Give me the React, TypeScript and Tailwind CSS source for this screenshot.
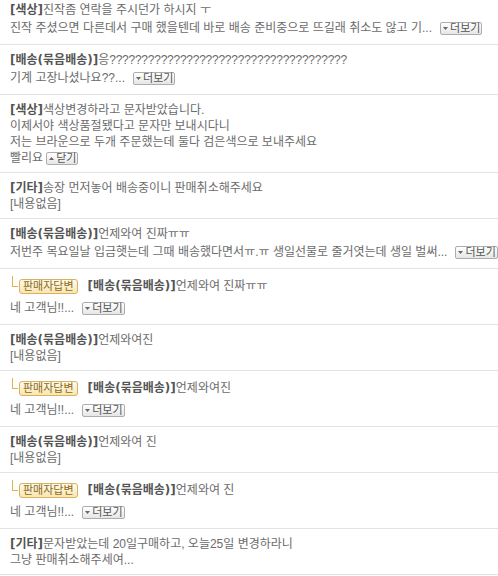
import React from 'react';

const bodyFont = "font-['Liberation_Sans','Noto_Sans_CJK_KR',sans-serif]";
const titleFont = "font-['DejaVu_Sans','Noto_Sans_CJK_KR',sans-serif]";

const ToggleButton: React.FC<{ label: string; up?: boolean }> = ({ label, up }) => (
  <span className="ml-2 inline-flex h-[13px] shrink-0 items-center gap-[1px] rounded-[2px] border border-[#adadad] bg-gradient-to-b from-white to-[#e6e6e6] pl-[2px] pr-[1px] text-[11px] leading-[11px] text-[#555]">
    <svg width="5" height="3" viewBox="0 0 5 3" className="mr-[1px]">
      <path d={up ? 'M0 3h5L2.5 0z' : 'M0 0h5L2.5 3z'} fill="#666" />
    </svg>
    {label}
  </span>
);

const Title: React.FC<{ children: React.ReactNode }> = ({ children }) => (
  <b className={`${titleFont} font-bold text-[#555]`}>{children}</b>
);

const ReplyBadge: React.FC = () => (
  <>
    <span className="ml-[2px] mr-[1px] h-[11px] w-[6px] shrink-0 self-start border-b border-l border-[#e0b44c]" />
    <span className="shrink-0 rounded-[3px] border border-[#d8b25c] bg-gradient-to-b from-[#fffaea] to-[#f9e6b0] px-[3px] text-[11px] leading-[13px] text-[#8a6a1c]">
      판매자답변
    </span>
  </>
);

const Row: React.FC<{ children: React.ReactNode; first?: boolean }> = ({ children, first }) => (
  <div className={`border-b border-[#e3e3e3] px-[10px] pb-[6px] ${first ? 'pt-[2px]' : 'pt-[7px]'}`}>{children}</div>
);

const Line: React.FC<{ children: React.ReactNode }> = ({ children }) => (
  <div className="flex h-4 items-center whitespace-nowrap">{children}</div>
);

const PreviewLine: React.FC<{ children: React.ReactNode }> = ({ children }) => (
  <div className="flex h-5 items-center whitespace-nowrap">
    {children}
    <ToggleButton label="더보기" />
  </div>
);

const PlainPost: React.FC<{ title: string; subject: string; body: string }> = ({ title, subject, body }) => (
  <Row>
    <Line>
      <Title>{title}</Title>
      {subject}
    </Line>
    <Line>{body}</Line>
  </Row>
);

const ReplyPost: React.FC<{ subject: string }> = ({ subject }) => (
  <Row>
    <div className="flex h-5 items-center whitespace-nowrap">
      <ReplyBadge />
      <span className="ml-[10px] flex items-center">
        <Title>[배송(묶음배송)]</Title>
        {subject}
      </span>
    </div>
    <div className="mt-[2px]">
      <PreviewLine>네 고객님!!...</PreviewLine>
    </div>
  </Row>
);

export default function App() {
  return (
    <div className={`w-[498px] overflow-hidden bg-white text-[12px] leading-4 text-[#6b6b6b] ${bodyFont}`}>
      <Row first>
        <Line>
          <Title>[색상]</Title>진작좀 연락을 주시던가 하시지 ㅜ
        </Line>
        <PreviewLine>진작 주셨으면 다른데서 구매 했을텐데 바로 배송 준비중으로 뜨길래 취소도 않고 기...</PreviewLine>
      </Row>

      <Row>
        <Line>
          <Title>[배송(묶음배송)]</Title>
          응<span className="tracking-[-0.25px]">?????????????????????????????????????</span>
        </Line>
        <PreviewLine>기계 고장나셨나요??...</PreviewLine>
      </Row>

      <Row>
        <Line>
          <Title>[색상]</Title>색상변경하라고 문자받았습니다.
        </Line>
        <Line>이제서야 색상품절됐다고 문자만 보내시다니</Line>
        <Line>저는 브라운으로 두개 주문했는데 둘다 검은색으로 보내주세요</Line>
        <Line>
          빨리요
          <span className="-ml-[5px] flex">
            <ToggleButton label="닫기" up />
          </span>
        </Line>
      </Row>

      <PlainPost title="[기타]" subject="송장 먼저놓어 배송중이니 판매취소해주세요" body="[내용없음]" />

      <Row>
        <Line>
          <Title>[배송(묶음배송)]</Title>언제와여 진짜ㅠㅠ
        </Line>
        <PreviewLine>저번주 목요일날 입금햇는데 그때 배송했다면서ㅠ.ㅠ 생일선물로 줄거엿는데 생일 벌써...</PreviewLine>
      </Row>

      <ReplyPost subject="언제와여 진짜ㅠㅠ" />
      <PlainPost title="[배송(묶음배송)]" subject="언제와여진" body="[내용없음]" />
      <ReplyPost subject="언제와여진" />
      <PlainPost title="[배송(묶음배송)]" subject="언제와여 진" body="[내용없음]" />
      <ReplyPost subject="언제와여 진" />
      <PlainPost title="[기타]" subject="문자받았는데 20일구매하고, 오늘25일 변경하라니" body="그냥 판매취소해주세여..." />
    </div>
  );
}
